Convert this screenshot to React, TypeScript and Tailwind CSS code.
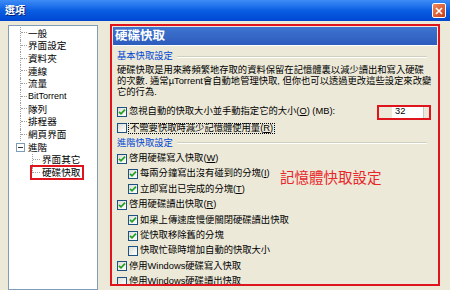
import React from "react";

type Row = {
  label: React.ReactNode;
  checked: boolean;
  indent?: boolean;
  focus?: boolean;
};

const U = ({ children }: { children: React.ReactNode }) => (
  <span className="underline underline-offset-1">{children}</span>
);

const CheckBox = ({ checked }: { checked: boolean }) => (
  <span className="w-[10px] h-[10px] shrink-0 border border-[#1c5180] bg-gradient-to-br from-[#dcdcd7] to-white flex items-center justify-center">
    {checked && (
      <svg width="8" height="8" viewBox="0 0 8 8">
        <path d="M1 3.8 L3 5.8 L7 1.6" stroke="#21a121" strokeWidth="1.7" fill="none" />
      </svg>
    )}
  </span>
);

const TreeItem = ({ label, last, latin }: { label: string; last?: boolean; latin?: boolean }) => (
  <div className="flex items-stretch h-[12.7px] pl-[11px]">
    <span className={`w-[7px] border-l border-dotted border-[#a0a0a0] ${last ? "h-1/2" : ""}`}>
      <span className="block h-1/2 border-b border-dotted border-[#a0a0a0]" />
    </span>
    <span className={`ml-[1px] flex items-center ${latin ? "text-[9px]" : ""}`}>{label}</span>
  </div>
);

const topItems = ["一般", "界面設定", "資料夾", "連線", "流量", "BitTorrent", "隊列", "排程器", "網頁界面"];

const Tree = () => (
  <div className="w-[90px] mt-[1px] bg-white border border-[#7f9db9] pt-[1px] text-[9.6px] leading-none text-black">
    {topItems.map((t) => (
      <TreeItem key={t} label={t} latin={t === "BitTorrent"} />
    ))}
    <div className="flex items-center h-[12.7px] pl-[7px]">
      <span className="w-[9px] h-[9px] border border-[#7f9db9] bg-white flex items-center justify-center">
        <span className="w-[5px] h-px bg-[#333]" />
      </span>
      <span className="ml-[3px]">進階</span>
    </div>
    <div className="flex items-stretch h-[12.7px] pl-[23px]">
      <span className="w-[8px] border-l border-dotted border-[#a0a0a0]">
        <span className="block h-1/2 border-b border-dotted border-[#a0a0a0]" />
      </span>
      <span className="ml-[2px] flex items-center">界面其它</span>
    </div>
    <div className="flex items-center h-[12.7px] pl-[21px]">
      <div className="flex items-stretch h-[15px] border-2 border-[#e0141c] pr-[2px]">
        <span className="w-[8px] h-1/2 border-l border-b border-dotted border-[#a0a0a0]" />
        <span className="ml-[2px] flex items-center">硬碟快取</span>
      </div>
    </div>
  </div>
);

const GroupHeader = ({ title }: { title: string }) => (
  <div className="flex items-center h-[12px] pr-[9px]">
    <span className="text-[#0046d5]">{title}</span>
    <span className="flex-1 ml-[4px] border-t border-[#d0d0bf] border-b border-b-white" />
  </div>
);

const CheckRow = ({ row }: { row: Row }) => (
  <div className={`flex items-center h-[15.4px] shrink-0 gap-[2px] ${row.indent ? "pl-[11px]" : ""}`}>
    <CheckBox checked={row.checked} />
    <span className={row.focus ? "outline outline-1 outline-dotted outline-black px-[1px]" : ""}>{row.label}</span>
  </div>
);

const advanced: Row[] = [
  { label: <>啓用硬碟寫入快取(<U>W</U>)</>, checked: true },
  { label: <>每兩分鐘寫出沒有碰到的分塊(<U>I</U>)</>, checked: true, indent: true },
  { label: <>立即寫出已完成的分塊(<U>T</U>)</>, checked: true, indent: true },
  { label: <>啓用硬碟讀出快取(<U>R</U>)</>, checked: true },
  { label: "如果上傳速度慢便關閉硬碟讀出快取", checked: true, indent: true },
  { label: "從快取移除舊的分塊", checked: true, indent: true },
  { label: "快取忙碌時增加自動的快取大小", checked: false, indent: true },
  { label: "停用Windows硬碟寫入快取", checked: true },
  { label: "停用Windows硬碟讀出快取", checked: false },
];

export default function App() {
  return (
    <div className="w-[450px] h-[290px] overflow-hidden bg-[#ece9d8] flex flex-col font-['Liberation_Sans','Noto_Sans_CJK_TC',sans-serif] text-black">
      <div className="h-[21px] shrink-0 flex items-center justify-between pl-[5px] pr-[4px] bg-gradient-to-b from-[#3d8cf7] via-[#0a5ee2] to-[#0046d2]">
        <span className="text-white font-bold text-[10px] [text-shadow:1px_1px_0_#0a1f70]">選項</span>
        <span className="w-[14px] h-[15px] rounded-[2px] border border-white bg-gradient-to-br from-[#f08a5c] to-[#c83a12] flex items-center justify-center">
          <svg width="8" height="8" viewBox="0 0 8 8">
            <path d="M1 1 L7 7 M7 1 L1 7" stroke="white" strokeWidth="1.6" />
          </svg>
        </span>
      </div>
      <div className="flex flex-1 min-h-0 pt-[3px] pl-[8px]">
        <Tree />
        <div className="relative ml-[12px] w-[330px] h-[262px] overflow-hidden border-2 border-[#e0141c] p-[1px] flex flex-col text-[9.3px] leading-none">
          <div className="h-[19px] shrink-0 bg-gradient-to-b from-[#3f74d0] to-[#2d5cbc] border-b border-white flex items-center pl-[2px]">
            <span className="text-white font-bold text-[12.5px]">硬碟快取</span>
          </div>
          <div className="pl-[4px] pr-[1px] flex flex-col">
            <div className="mt-[5px]">
              <GroupHeader title="基本快取設定" />
            </div>
            <p className="mt-[1.5px] leading-[11px]">
              硬碟快取是用來將頻繁地存取的資料保留在記憶體裏以減少讀出和寫入硬碟
              <br />
              的次數. 通常µTorrent會自動地管理快取, 但你也可以透過更改這些設定來改變
              <br />
              它的行為.
            </p>
            <div className="mt-[7px] flex items-center h-[15px] pr-[5px]">
              <CheckBox checked />
              <span className="ml-[2px] flex-1">
                忽視自動的快取大小並手動指定它的大小(<U>O</U>) (MB):
              </span>
              <div className="w-[54px] h-[15px] border-2 border-[#e0141c] flex justify-end pr-[5px]">
                <span className="w-[32px] h-full bg-white border-r border-[#c8c8c8] pl-[3px] flex items-center">32</span>
              </div>
            </div>
            <div className="mt-[1px]">
              <CheckRow row={{ label: <>不需要快取時減少記憶體使用量(<U>R</U>)</>, checked: false, focus: true }} />
            </div>
            <div className="mt-[1.5px]">
              <GroupHeader title="進階快取設定" />
            </div>
            <div className="mt-[1.5px] flex flex-col">
              {advanced.map((r, i) => (
                <CheckRow key={i} row={r} />
              ))}
            </div>
          </div>
          <span className="absolute left-[168px] top-[145px] text-[#e8262a] text-[14.5px] leading-none">記憶體快取設定</span>
        </div>
      </div>
    </div>
  );
}
